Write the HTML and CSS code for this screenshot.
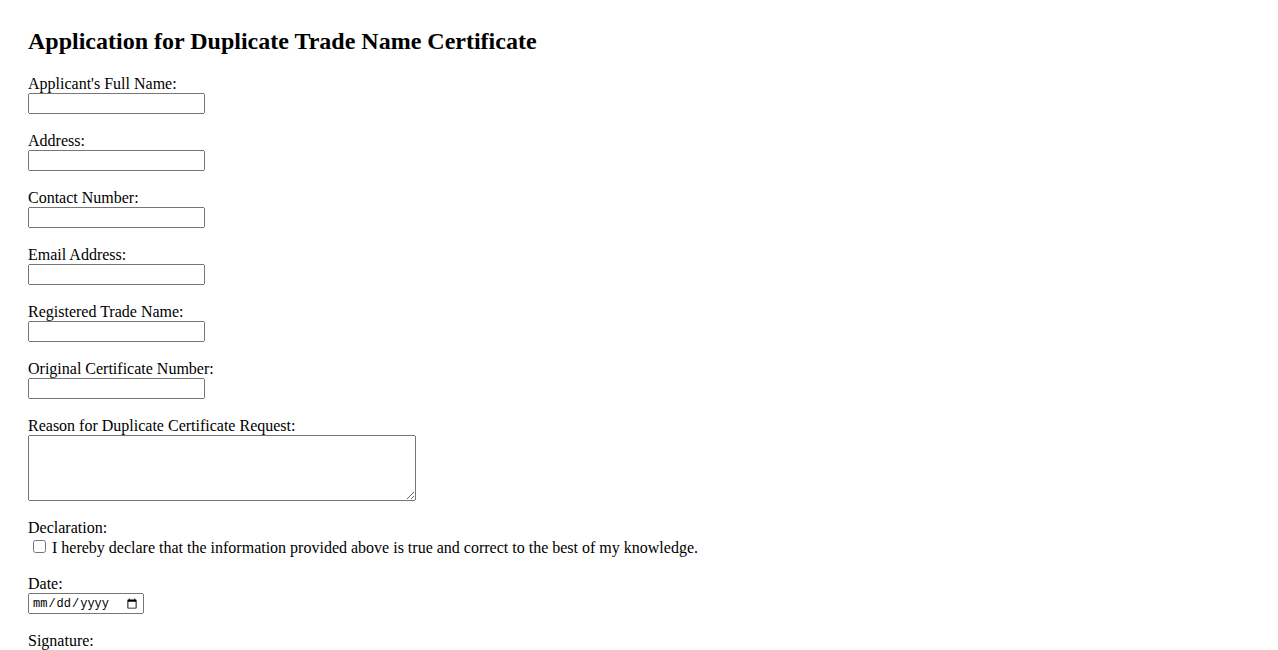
FILE: index.html
```html
<!DOCTYPE html>
<html lang="en">
<head>
  <meta charset="UTF-8" />
  <title>Application for Duplicate Trade Name Certificate</title>
  <link rel="stylesheet" href="styles.css">
</head>
<body>
  <h2>Application for Duplicate Trade Name Certificate</h2>

  <form class="app-form">
    <div class="field">
      <label for="fullName">Applicant's Full Name:</label>
      <input id="fullName" type="text" />
    </div>
    <div class="field">
      <label for="address">Address:</label>
      <input id="address" type="text" />
    </div>
    <div class="field">
      <label for="phone">Contact Number:</label>
      <input id="phone" type="tel" />
    </div>
    <div class="field">
      <label for="email">Email Address:</label>
      <input id="email" type="email" />
    </div>
    <div class="field">
      <label for="tradeName">Registered Trade Name:</label>
      <input id="tradeName" type="text" />
    </div>
    <div class="field">
      <label for="certNo">Original Certificate Number:</label>
      <input id="certNo" type="text" />
    </div>
    <div class="field">
      <label for="reason">Reason for Duplicate Certificate Request:</label>
      <textarea id="reason"></textarea>
    </div>
    <div class="field">
      <label>Declaration:</label>
      <div class="check-row">
        <input id="declare" type="checkbox" />
        <span>I hereby declare that the information provided above is true and correct to the best of my knowledge.</span>
      </div>
    </div>
    <div class="field">
      <label for="date">Date:</label>
      <input id="date" type="date" />
    </div>
    <div class="field">
      <label for="signature">Signature:</label>
      <input id="signature" type="text" />
    </div>
  </form>
</body>
</html>
```

FILE: styles.css
```css
body {
  font-family: "Liberation Serif", "Times New Roman", serif;
  font-size: 16px;
  color: #000;
  background: #fff;
  margin: 0;
  padding: 27px 28px;
}
h2 {
  font-size: 24px;
  font-weight: bold;
  margin: 0 0 20px;
  line-height: 28px;
}
.field {
  margin-bottom: 18px;
}
.field label {
  display: block;
  line-height: 18px;
}
.field input[type="text"],
.field input[type="tel"],
.field input[type="email"] {
  display: block;
  width: 177px;
  height: 21px;
  box-sizing: border-box;
  margin: 0;
}
.field textarea {
  display: block;
  width: 388px;
  height: 66px;
  box-sizing: border-box;
  margin: 0;
}
.check-row {
  display: flex;
  align-items: center;
  gap: 6px;
  line-height: 18px;
  margin-top: 2px;
}
.check-row input {
  width: 13px;
  height: 13px;
  margin: 0 0 3px 5px;
}
.field input[type="date"] {
  display: block;
  width: 116px;
  height: 21px;
  box-sizing: border-box;
  margin: 0;
  font-family: "Liberation Mono", monospace;
  font-size: 12px;
  padding: 1px 2px;
}
```
